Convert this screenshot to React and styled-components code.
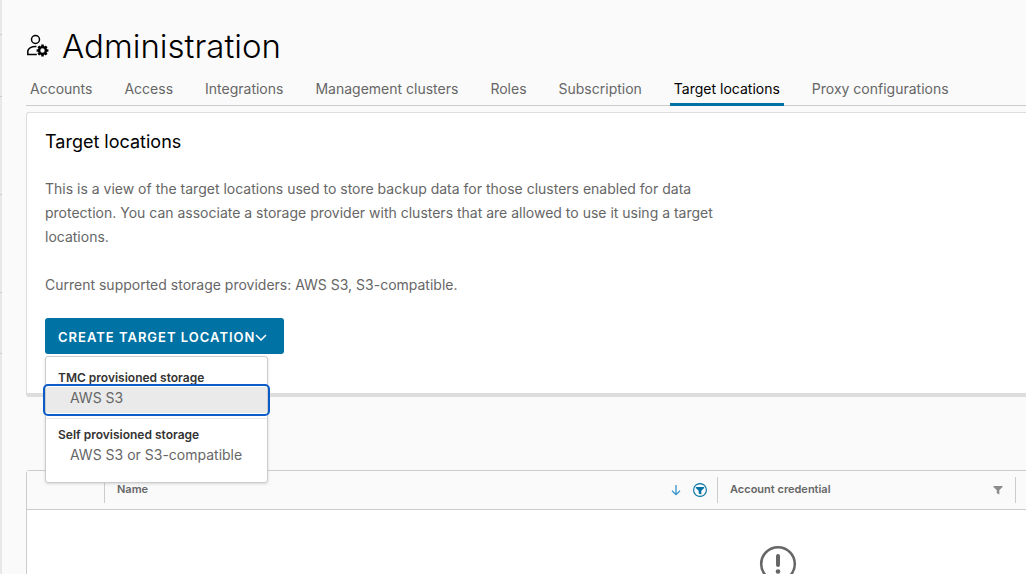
import React from "react";
import styled, { createGlobalStyle } from "styled-components";

const GlobalStyle = createGlobalStyle`
  *, *::before, *::after { box-sizing: border-box; }
  html, body { margin: 0; height: 100%; }
  #root { height: 100%; }
  body {
    background: #fafafa;
    color: #666;
    font-family: Metropolis, Inter, "Liberation Sans", sans-serif;
    font-size: 14px;
    line-height: 24px;
    overflow: hidden;
  }
  button { font: inherit; color: inherit; background: none; border: 0; padding: 0; margin: 0; cursor: pointer; }
`;

const Shell = styled.div`
  display: flex;
  height: 100%;
  overflow: hidden;
`;

const Rail = styled.aside`
  flex: none;
  width: 2px;
  background: #e8e8e8;
`;

const RailGroup = styled.div`
  height: ${(p) => p.$height}px;
  border-bottom: 1px solid #ccc;
`;

const Main = styled.main`
  flex: 1;
  min-width: 0;
  padding: 24px 0 0 24px;
`;

const PageHeader = styled.header`
  display: flex;
  align-items: center;
  gap: 12px;
  height: 44px;
`;

const PageTitle = styled.h1`
  margin: 0;
  color: #000;
  font-size: 33px;
  font-weight: 300;
  line-height: 44px;
`;

const Tabs = styled.nav`
  display: flex;
  gap: 24px;
  height: 38px;
  border-bottom: 1px solid #ccc;
`;

const Tab = styled.a`
  height: 38px;
  padding: 9px 4px 0;
  color: ${(p) => (p.$active ? "#000" : "#666")};
  border-bottom: 3px solid ${(p) => (p.$active ? "#0072a3" : "transparent")};
  text-decoration: none;
  white-space: nowrap;
`;

const Card = styled.section`
  margin-top: 6px;
  min-height: 285px;
  padding: 17px 18px 0;
  background: #fff;
  border: 1px solid #ddd;
  border-right: 0;
  border-bottom: 4px solid #ddd;
  border-radius: 3px 0 0 3px;
`;

const CardTitle = styled.h2`
  margin: 0 0 23px;
  color: #000;
  font-size: 18px;
  font-weight: 400;
  line-height: 24px;
`;

const Description = styled.div`
  display: grid;
  gap: 24px;
  max-width: 696px;
`;

const Copy = styled.p`
  margin: 0;
`;

const Dropdown = styled.div`
  position: relative;
  width: max-content;
  margin-top: 21px;
`;

const PrimaryButton = styled.button`
  && {
    display: flex;
    align-items: center;
    width: 239px;
    height: 36px;
    padding: 1px 13px 0;
    background: #0072a3;
    color: #fff;
    border-radius: 3px;
    font-size: 13px;
    font-weight: 600;
    letter-spacing: 1px;
    white-space: nowrap;
  }
`;

const Menu = styled.div`
  position: absolute;
  z-index: 1;
  top: 38px;
  left: 0;
  width: 223px;
  height: 127px;
  padding-top: 12px;
  background: #fff;
  border: 1px solid #ccc;
  border-radius: 3px;
  box-shadow: 0 1px 3px rgba(115, 115, 115, 0.25);
`;

const MenuHeading = styled.h3`
  margin: 0;
  padding-left: 12px;
  color: #333;
  font-size: 12px;
  font-weight: 600;
  line-height: 18px;
`;

const MenuItem = styled.button`
  && {
    display: block;
    width: 100%;
    height: 26px;
    padding: 0 0 4px 24px;
    text-align: left;
    line-height: 20px;
    background: ${(p) => (p.$focused ? "#eaeaea" : "transparent")};
    border-radius: 2px;
    outline: ${(p) => (p.$focused ? "2px solid #0a5cc8" : "none")};
    outline-offset: 1px;
  }
`;

const Divider = styled.hr`
  margin: 5px 0 7px;
  border: 0;
  border-top: 1px solid #e8e8e8;
`;

const GridFrame = styled.div`
  margin-top: 73px;
  width: 1504px;
  background: #fff;
  border: 1px solid #ccc;
  border-radius: 3px 3px 0 0;
`;

const Grid = styled.table`
  width: 100%;
  table-layout: fixed;
  border-spacing: 0;

  th, td { padding: 0; }
  thead th {
    height: 39px;
    background: #fafafa;
    border-bottom: 1px solid #ccc;
  }
  tbody td { height: 140px; vertical-align: top; padding-top: 35px; text-align: center; }
`;

const HeadCell = styled.div`
  display: flex;
  align-items: center;
  gap: 10px;
  height: 26px;
  padding: 0 10px 0 12px;
  border-left: 1px solid ${(p) => (p.$first ? "transparent" : "#ccc")};
  font-size: 11px;
  font-weight: 600;
  line-height: 24px;
  text-align: left;
`;

const HeadLabel = styled.span`
  flex: 1;
  padding-bottom: 2px;
`;

const IconButton = styled.button`
  && {
    display: flex;
    justify-content: center;
    min-width: 14px;
    color: ${(p) => p.$color};
  }
`;

const tabs = [
  "Accounts",
  "Access",
  "Integrations",
  "Management clusters",
  "Roles",
  "Subscription",
  "Target locations",
  "Proxy configurations",
];

const railGroups = [35, 62, 98, 98, 61];

const gearTeeth = [0, 45, 90, 135, 180, 225, 270, 315];

function AdminIcon() {
  return (
    <svg width="24" height="24" viewBox="0 0 24 24" fill="none" aria-hidden="true">
      <circle cx="9.5" cy="5.5" r="4" stroke="#000" strokeWidth="1.5" />
      <path d="M10.5 12.5C6 12.2 1.8 14 1.8 17.5v3h9" stroke="#000" strokeWidth="1.5" />
      <circle cx="16.5" cy="16.5" r="3.4" stroke="#000" strokeWidth="2.4" />
      {gearTeeth.map((a) => (
        <path key={a} d="M15.2 10.6h2.6v2.4h-2.6z" fill="#000" transform={`rotate(${a} 16.5 16.5)`} />
      ))}
    </svg>
  );
}

function Chevron() {
  return (
    <svg width="12" height="8" viewBox="0 0 12 8" fill="none" aria-hidden="true">
      <path d="M1 2l5 5 5-5" stroke="#fff" strokeWidth="1.5" />
    </svg>
  );
}

function SortArrow() {
  return (
    <svg width="10" height="12" viewBox="0 0 10 12" fill="none" aria-hidden="true">
      <path d="M5 1v9.5M1 6.7l4 4 4-4" stroke="currentColor" strokeWidth="1.3" />
    </svg>
  );
}

function FilterOn() {
  return (
    <svg width="14" height="14" viewBox="0 0 14 14" aria-hidden="true">
      <circle cx="7" cy="7" r="6.4" fill="none" stroke="currentColor" strokeWidth="1.1" />
      <path d="M2.8 4h8.4v1L8.3 7.8v3.8l-2.6-1V7.8L2.8 5z" fill="currentColor" />
    </svg>
  );
}

function Filter() {
  return (
    <svg width="10" height="10" viewBox="0 0 10 10" aria-hidden="true">
      <path d="M.5 1h9v1L6.3 5.2V9.4L3.8 8.2v-3L.5 2z" fill="currentColor" />
    </svg>
  );
}

function EmptyIcon() {
  return (
    <svg width="38" height="38" viewBox="0 0 38 38" fill="none" aria-hidden="true">
      <circle cx="19" cy="19" r="16.8" stroke="#666" strokeWidth="2.6" />
      <path d="M19 11v9" stroke="#666" strokeWidth="4" strokeLinecap="round" />
      <circle cx="19" cy="26.5" r="2.3" fill="#666" />
    </svg>
  );
}

export default function App() {
  return (
    <>
      <GlobalStyle />
      <Shell>
        <Rail>
          {railGroups.map((height, i) => (
            <RailGroup key={i} $height={height} />
          ))}
        </Rail>
        <Main>
          <PageHeader>
            <AdminIcon />
            <PageTitle>Administration</PageTitle>
          </PageHeader>
          <Tabs>
            {tabs.map((name) => (
              <Tab key={name} href="#" $active={name === "Target locations"}>
                {name}
              </Tab>
            ))}
          </Tabs>
          <Card>
            <CardTitle>Target locations</CardTitle>
            <Description>
              <Copy>
                This is a view of the target locations used to store backup data for those clusters
                enabled for data protection. You can associate a storage provider with clusters that
                are allowed to use it using a target locations.
              </Copy>
              <Copy>Current supported storage providers: AWS S3, S3-compatible.</Copy>
            </Description>
            <Dropdown>
              <PrimaryButton type="button" aria-haspopup="true" aria-expanded="true">
                CREATE TARGET LOCATION
                <Chevron />
              </PrimaryButton>
              <Menu>
                <MenuHeading>TMC provisioned storage</MenuHeading>
                <MenuItem type="button" $focused>AWS S3</MenuItem>
                <Divider />
                <MenuHeading>Self provisioned storage</MenuHeading>
                <MenuItem type="button">AWS S3 or S3-compatible</MenuItem>
              </Menu>
            </Dropdown>
          </Card>
          <GridFrame>
            <Grid>
              <colgroup>
                <col width="77" />
                <col width="613" />
                <col width="298" />
                <col />
              </colgroup>
              <thead>
                <tr>
                  <th><HeadCell $first /></th>
                  <th>
                    <HeadCell>
                      <HeadLabel>Name</HeadLabel>
                      <IconButton type="button" aria-label="Sort by name" $color="#3a94cc"><SortArrow /></IconButton>
                      <IconButton type="button" aria-label="Filter by name" $color="#0072a3"><FilterOn /></IconButton>
                    </HeadCell>
                  </th>
                  <th>
                    <HeadCell>
                      <HeadLabel>Account credential</HeadLabel>
                      <IconButton type="button" aria-label="Filter by account credential" $color="#8c8c8c"><Filter /></IconButton>
                    </HeadCell>
                  </th>
                  <th><HeadCell /></th>
                </tr>
              </thead>
              <tbody>
                <tr>
                  <td colSpan={4}><EmptyIcon /></td>
                </tr>
              </tbody>
            </Grid>
          </GridFrame>
        </Main>
      </Shell>
    </>
  );
}
